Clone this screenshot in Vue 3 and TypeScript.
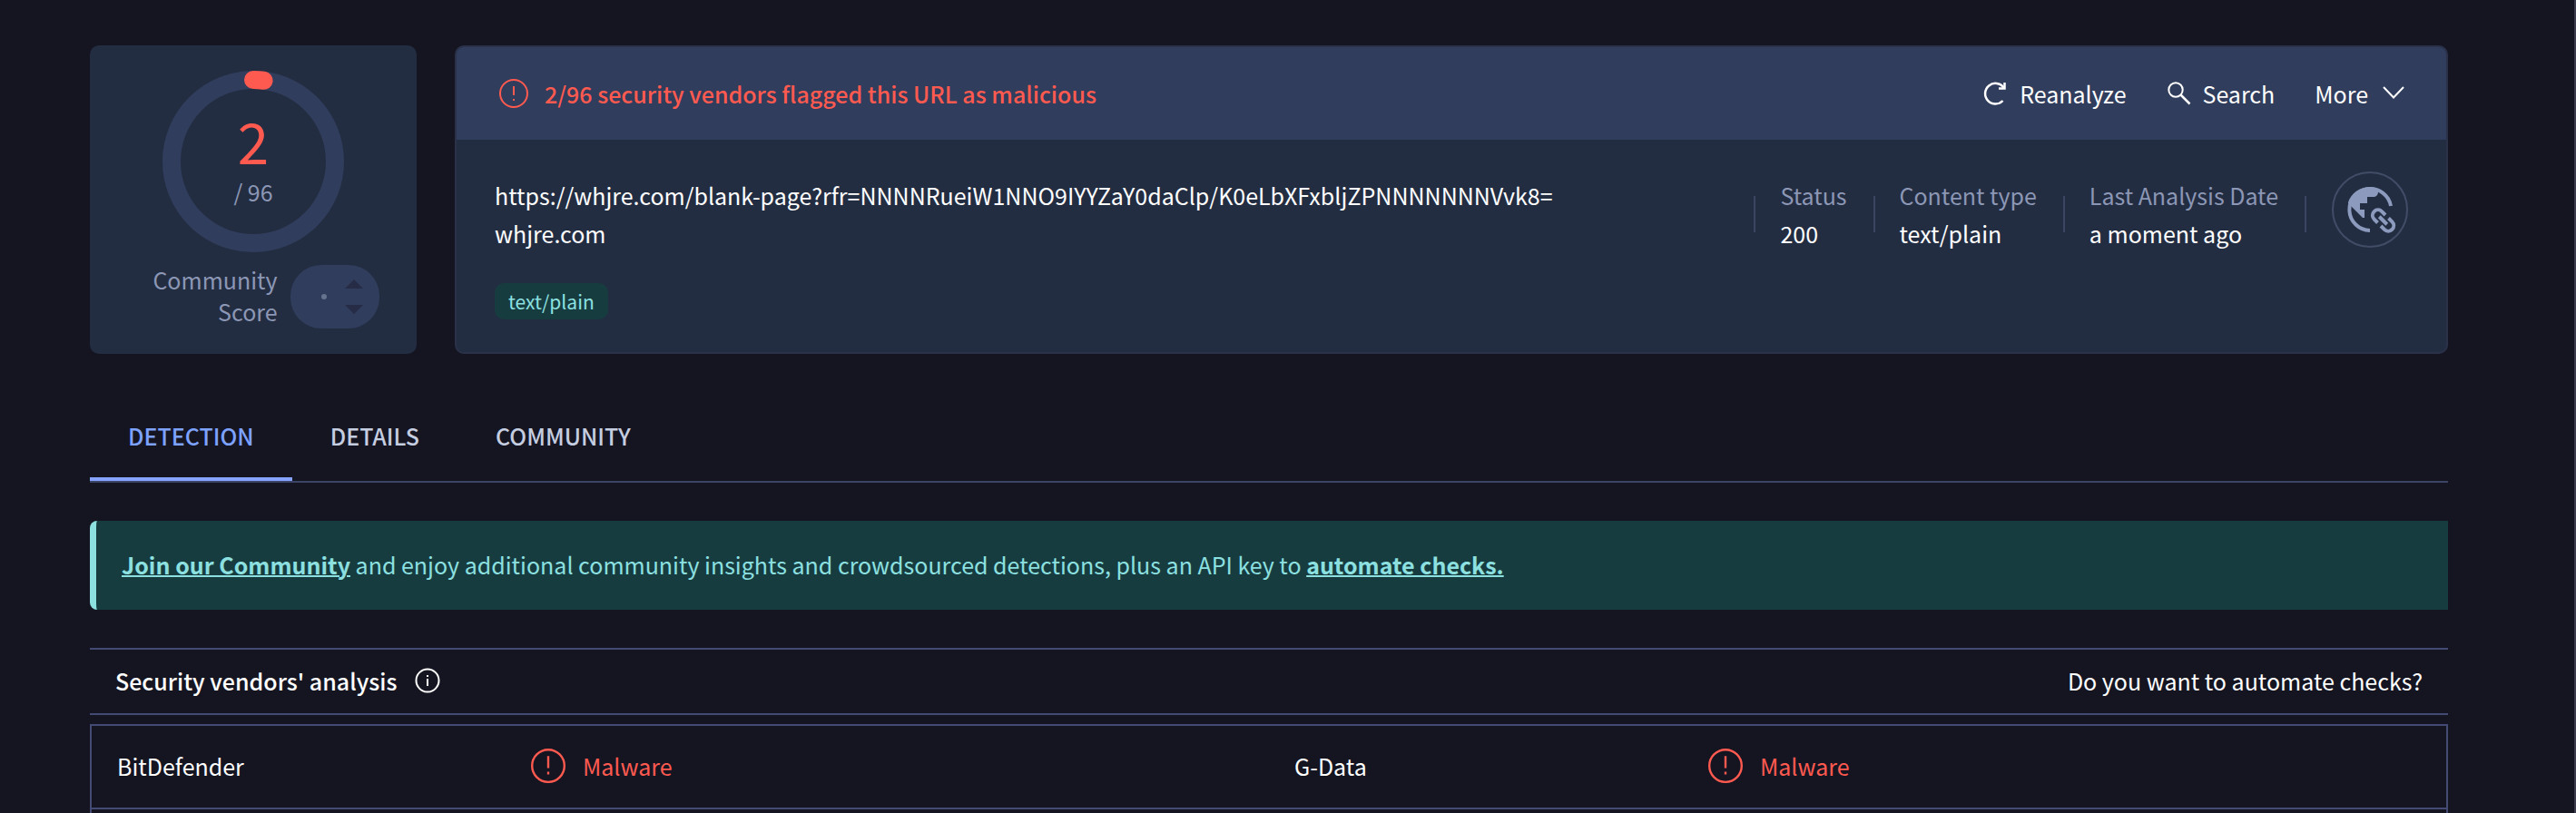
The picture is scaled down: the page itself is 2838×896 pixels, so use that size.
<script setup lang="ts">
interface Fact {
  label: string
  value: string
}

interface Verdict {
  vendor: string
  result: string
}

const flagged = 2
const total = 96
const ringRadius = 90
const ringLength = 2 * Math.PI * ringRadius
const ringDash = `${(flagged / total) * ringLength} ${ringLength}`

const facts: Fact[] = [
  { label: 'Status', value: '200' },
  { label: 'Content type', value: 'text/plain' },
  { label: 'Last Analysis Date', value: 'a moment ago' },
]

const tabs: string[] = ['DETECTION', 'DETAILS', 'COMMUNITY']

const rows: Verdict[][] = [
  [
    { vendor: 'BitDefender', result: 'Malware' },
    { vendor: 'G-Data', result: 'Malware' },
  ],
]
</script>

<template>
  <main class="page">
    <section class="summary">
      <aside class="score">
        <div class="ring">
          <svg class="ring-art" viewBox="0 0 200 200" aria-hidden="true">
            <circle class="ring-track" cx="100" cy="100" :r="ringRadius" />
            <circle
              class="ring-value"
              cx="100"
              cy="100"
              :r="ringRadius"
              :stroke-dasharray="ringDash"
              transform="rotate(-90 100 100)"
            />
          </svg>
          <div class="ring-text">
            <span class="ring-count">{{ flagged }}</span>
            <span class="ring-total">/ {{ total }}</span>
          </div>
        </div>
        <div class="community">
          <span class="community-label">Community<br />Score</span>
          <div class="votes">
            <span class="votes-dot"></span>
            <svg class="votes-arrows" viewBox="0 0 20 38" aria-hidden="true">
              <path d="M10 0L20 10H0zM0 28H20L10 38z" />
            </svg>
          </div>
        </div>
      </aside>

      <article class="report">
        <header class="report-head">
          <svg class="icon-alert" viewBox="0 0 32 32" aria-hidden="true">
            <circle cx="16" cy="16" r="15" />
            <path d="M16 8V18M16 22V24" />
          </svg>
          <h1 class="verdict">{{ flagged }}/{{ total }} security vendors flagged this URL as malicious</h1>
          <button class="action" type="button">
            <svg class="icon-action" viewBox="0 0 26 26" aria-hidden="true">
              <path class="heavy" d="M21.5 21A11.3 11.3 0 1 1 22.5 6.5" />
              <path class="heavy" d="M23.5 1V7.5H17" />
            </svg>
            Reanalyze
          </button>
          <button class="action" type="button">
            <svg class="icon-action" viewBox="-2 0 26 26" aria-hidden="true">
              <circle cx="9" cy="9" r="7.7" />
              <path class="heavy" d="M14.5 14.5L24.5 24.5" />
            </svg>
            Search
          </button>
          <button class="action" type="button">
            More
            <svg class="icon-action chevron" viewBox="0 0 26 26" aria-hidden="true">
              <path d="M3 6L14 17.5L25 6" />
            </svg>
          </button>
        </header>
        <div class="report-body">
          <div class="target">
            <p class="line">https://whjre.com/blank-page?rfr=NNNNRueiW1NNO9IYYZaY0daClp/K0eLbXFxbljZPNNNNNNNVvk8=</p>
            <p class="line">whjre.com</p>
            <a class="tag" href="#">text/plain</a>
          </div>
          <dl class="facts">
            <div v-for="fact in facts" :key="fact.label" class="fact">
              <dt>{{ fact.label }}</dt>
              <dd>{{ fact.value }}</dd>
            </div>
          </dl>
          <div class="kind">
            <svg viewBox="0 0 84 84" aria-hidden="true">
              <circle class="kind-edge" cx="42" cy="42" r="41" />
              <path class="kind-ring" d="M42 65A23 23 0 1 1 65 38" />
              <path
                class="kind-land"
                d="M18 34C21 24 31 17 42 17C45 17 48 18 51 20V22C51 26 49 28 45 28H39V35H31V42H36V51H34L18 35z"
              />
              <g transform="translate(56.5 54) rotate(45)">
                <path
                  class="kind-link"
                  d="M-2.5 -6H-8A6 6 0 0 0 -8 6H-2.5M2.5 -6H8A6 6 0 0 1 8 6H2.5M-6 0H6"
                />
              </g>
            </svg>
          </div>
        </div>
      </article>
    </section>

    <nav class="tabs">
      <a v-for="(tab, i) in tabs" :key="tab" class="tab" :class="{ active: i === 0 }" href="#">{{ tab }}</a>
    </nav>

    <p class="banner">
      <a href="#">Join our Community</a> and enjoy additional community insights and crowdsourced detections, plus an
      API key to <a href="#">automate checks.</a>
    </p>

    <section class="analysis">
      <header class="analysis-head">
        <h2>Security vendors' analysis</h2>
        <svg class="icon-info" viewBox="0 0 28 28" aria-hidden="true">
          <circle cx="14" cy="14" r="12.5" />
          <path d="M14 12V20M14 8V10" />
        </svg>
        <a class="automate" href="#">Do you want to automate checks?</a>
      </header>
      <div class="results">
        <table>
          <tbody>
            <tr v-for="(row, r) in rows" :key="r">
              <template v-for="item in row" :key="item.vendor">
                <th scope="row">{{ item.vendor }}</th>
                <td>
                  <span class="result">
                    <svg class="icon-alert large" viewBox="0 0 32 32" aria-hidden="true">
                      <circle cx="16" cy="16" r="15" />
                      <path d="M16 7V18M16 21.5V24" />
                    </svg>
                    {{ item.result }}
                  </span>
                </td>
              </template>
            </tr>
          </tbody>
        </table>
      </div>
    </section>
  </main>
</template>

<style>
body {
  margin: 0;
  background: #151522;
}
</style>

<style scoped>
.page {
  box-sizing: border-box;
  display: flex;
  flex-direction: column;
  min-height: 100vh;
  padding: 50px 139px 0 99px;
  border-right: 2px solid #3b3b4d;
  background: #151522;
  color: #fff;
  font-family: "Noto Sans CJK SC", "Noto Sans", sans-serif;
  font-size: 25px;
  line-height: 42px;
}

svg {
  display: block;
  flex: none;
  fill: none;
  overflow: visible;
}

a {
  color: inherit;
}

.summary {
  display: flex;
  gap: 42px;
}

.score {
  box-sizing: border-box;
  display: flex;
  flex: none;
  flex-direction: column;
  align-items: center;
  width: 360px;
  padding: 28px 0 26px;
  border-radius: 10px;
  background: #232d42;
}

.ring {
  display: grid;
  width: 200px;
  height: 200px;
}

.ring > * {
  grid-area: 1 / 1;
}

.ring-track,
.ring-value {
  stroke-width: 20;
}

.ring-track {
  stroke: #303d5c;
}

.ring-value {
  stroke: #ff5a50;
  stroke-linecap: round;
}

.ring-text {
  display: flex;
  flex-direction: column;
  align-items: center;
  justify-content: center;
}

.ring-count {
  color: #ff5a50;
  font-size: 62px;
  line-height: 66px;
}

.ring-total {
  color: #8c97b5;
  line-height: 48px;
}

.community {
  display: flex;
  align-items: center;
  gap: 14px;
  margin-top: 13px;
  padding-left: 28px;
}

.community-label {
  padding-bottom: 2px;
  color: #8c97b5;
  line-height: 35px;
  text-align: right;
}

.votes {
  box-sizing: border-box;
  display: flex;
  align-items: center;
  justify-content: flex-end;
  gap: 20px;
  width: 98px;
  height: 70px;
  padding-right: 18px;
  border-radius: 34px;
  background: #303d5c;
}

.votes-dot {
  width: 6px;
  height: 6px;
  border-radius: 50%;
  background: #66738f;
}

.votes-arrows {
  width: 20px;
  height: 38px;
  fill: #262c45;
}

.report {
  box-sizing: border-box;
  flex: 1;
  min-height: 340px;
  border: 2px solid #2a3148;
  border-radius: 10px;
  overflow: hidden;
  background: #232d42;
}

.report-head {
  display: flex;
  align-items: center;
  height: 102px;
  padding: 0 46px 0 47px;
  background: #303d5c;
}

.icon-alert {
  width: 32px;
  height: 32px;
  stroke: #ff5a50;
  stroke-width: 2;
}

.icon-alert.large {
  width: 38px;
  height: 38px;
}

.verdict {
  flex: 1;
  margin: 0 0 0 18px;
  color: #ff5a50;
  font-size: 25px;
  font-weight: 500;
}

.action {
  display: flex;
  align-items: center;
  gap: 14px;
  margin-left: 44px;
  padding: 0;
  border: 0;
  background: none;
  color: #fff;
  font: inherit;
}

.icon-action {
  width: 26px;
  height: 26px;
  stroke: #fff;
  stroke-width: 2;
}

.heavy {
  stroke-width: 2.5;
}

.report-body {
  display: flex;
  align-items: flex-start;
  padding: 35px 42px;
}

.target {
  flex: 1;
  padding-top: 5px;
}

.line {
  margin: 0;
}

.tag {
  display: inline-block;
  margin-top: 34px;
  padding: 0 15px;
  border-radius: 10px;
  background: #173c40;
  color: #8ce0e0;
  font-size: 21px;
  line-height: 40px;
  text-decoration: none;
}

.facts {
  display: flex;
  margin: 0;
  padding-top: 5px;
}

.fact {
  position: relative;
  padding: 0 29px;
}

.fact:last-child {
  padding-right: 31px;
}

.fact::before,
.fact:last-child::after {
  position: absolute;
  top: 22px;
  width: 2px;
  height: 40px;
  background: #3b4562;
  content: "";
}

.fact::before {
  left: 0;
}

.fact:last-child::after {
  right: 0;
}

.fact dt {
  color: #8c97b5;
}

.fact dd {
  margin: 0;
}

.kind {
  width: 84px;
  margin-left: 28px;
}

.kind-edge {
  stroke: #414c66;
  stroke-width: 2;
}

.kind-ring {
  stroke: #8c9bbd;
  stroke-width: 4;
}

.kind-land {
  fill: #8c9bbd;
}

.kind-link {
  stroke: #8c9bbd;
  stroke-width: 4;
}

.tabs {
  display: flex;
  margin-top: 42px;
  border-bottom: 2px solid #3c4466;
}

.tab {
  padding: 27px 42px 25px;
  border-bottom: 4px solid transparent;
  color: #c5cee0;
  font-weight: 500;
  text-decoration: none;
}

.tab.active {
  border-color: #85a3ff;
  color: #7da2ff;
}

.banner {
  margin: 42px 0 0;
  padding: 27px 28px 29px;
  border-left: 7px solid #8ce0e0;
  border-radius: 8px 0 0 8px;
  background: #173c40;
  color: #8ce0e0;
}

.banner a {
  font-weight: 700;
  text-decoration-thickness: 2px;
}

.analysis {
  display: flex;
  flex: 1;
  flex-direction: column;
  margin-top: 42px;
}

.analysis-head {
  display: flex;
  align-items: center;
  padding: 13px 28px 15px;
  border: solid #434b75;
  border-width: 2px 0;
}

.analysis-head h2 {
  margin: 0;
  font-size: 25px;
  font-weight: 500;
}

.icon-info {
  width: 28px;
  height: 28px;
  margin-left: 20px;
  stroke: #fff;
  stroke-width: 2;
}

.automate {
  margin-left: auto;
  text-decoration: none;
}

.results {
  flex: 1;
  margin-top: 10px;
  border: solid #434b75;
  border-width: 2px 2px 0;
}

table {
  width: 100%;
  border-collapse: collapse;
  table-layout: fixed;
}

tr {
  border-bottom: 2px solid #434b75;
}

th,
td {
  padding: 23px 28px 25px;
}

td {
  padding-left: 30px;
}

th {
  width: 17.5%;
  box-sizing: border-box;
  font-weight: 400;
  text-align: left;
}

.result {
  display: flex;
  align-items: center;
  gap: 19px;
  color: #ff5a50;
}
</style>
